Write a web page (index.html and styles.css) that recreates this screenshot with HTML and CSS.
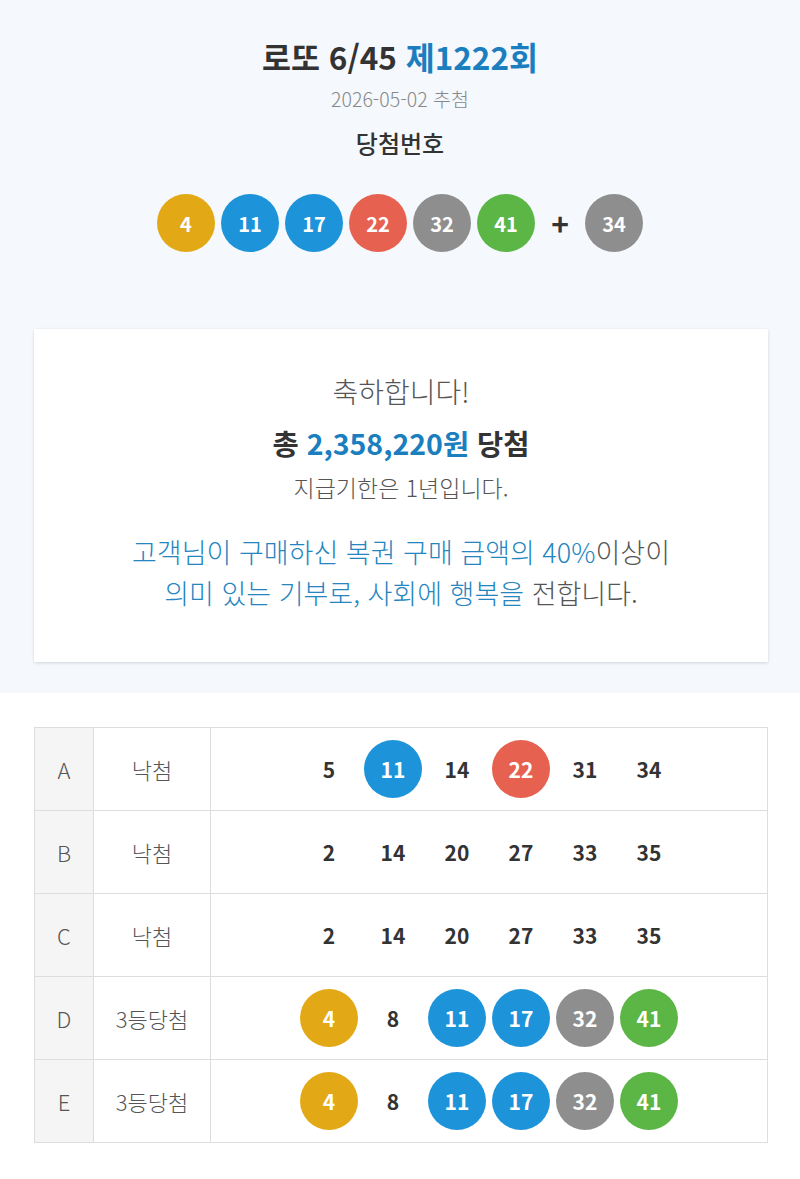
FILE: index.html
```html
<!DOCTYPE html>
<html lang="ko">
<head>
<meta charset="utf-8">
<link rel="stylesheet" href="styles.css">
</head>
<body>
<div class="top">
  <h1 class="title">로또 6/45 <span class="blue">제1222회</span></h1>
  <div class="date">2026-05-02 추첨</div>
  <div class="label">당첨번호</div>
  <div class="win-row">
    <span class="ball y">4</span>
    <span class="ball b">11</span>
    <span class="ball b">17</span>
    <span class="ball r">22</span>
    <span class="ball g">32</span>
    <span class="ball gr">41</span>
    <span class="plus">+</span>
    <span class="ball g">34</span>
  </div>
  <div class="card">
    <div class="congrats">축하합니다!</div>
    <div class="total">총 <span class="blue">2,358,220원</span> 당첨</div>
    <div class="limit">지급기한은 1년입니다.</div>
    <div class="donate"><span class="blue2">고객님이 구매하신 복권 구매 금액의 40%</span>이상이<br><span class="blue2">의미 있는 기부로, 사회에 행복을</span> 전합니다.</div>
  </div>
</div>
<table class="result">
  <tr>
    <td class="c1">A</td><td class="c2">낙첨</td>
    <td class="c3"><div class="nums"><span class="n">5</span><span class="n ball b">11</span><span class="n">14</span><span class="n ball r">22</span><span class="n">31</span><span class="n">34</span></div></td>
  </tr>
  <tr>
    <td class="c1">B</td><td class="c2">낙첨</td>
    <td class="c3"><div class="nums"><span class="n">2</span><span class="n">14</span><span class="n">20</span><span class="n">27</span><span class="n">33</span><span class="n">35</span></div></td>
  </tr>
  <tr>
    <td class="c1">C</td><td class="c2">낙첨</td>
    <td class="c3"><div class="nums"><span class="n">2</span><span class="n">14</span><span class="n">20</span><span class="n">27</span><span class="n">33</span><span class="n">35</span></div></td>
  </tr>
  <tr>
    <td class="c1">D</td><td class="c2">3등당첨</td>
    <td class="c3"><div class="nums"><span class="n ball y">4</span><span class="n">8</span><span class="n ball b">11</span><span class="n ball b">17</span><span class="n ball g">32</span><span class="n ball gr">41</span></div></td>
  </tr>
  <tr>
    <td class="c1">E</td><td class="c2">3등당첨</td>
    <td class="c3"><div class="nums"><span class="n ball y">4</span><span class="n">8</span><span class="n ball b">11</span><span class="n ball b">17</span><span class="n ball g">32</span><span class="n ball gr">41</span></div></td>
  </tr>
</table>
</body>
</html>
```
FILE: styles.css
```css
html, body {
  margin: 0;
  padding: 0;
  background: #ffffff;
  font-family: "Noto Sans CJK KR", "Noto Sans", sans-serif;
  color: #333;
}
.top {
  background: #f5f8fc;
  padding: 36px 0 31px;
  text-align: center;
}
.title {
  margin: 0;
  font-size: 31.5px;
  line-height: 40px;
  font-weight: 700;
  color: #333;
}
.blue { color: #1b7fbf; }
.blue2 { color: #2585bf; }
.date {
  margin-top: 10px;
  font-size: 19.5px;
  line-height: 26px;
  font-weight: 300;
  color: #888;
}
.label {
  margin-top: 16px;
  font-size: 24px;
  line-height: 30px;
  font-weight: 500;
  color: #333;
}
.win-row {
  margin-top: 36px;
  display: flex;
  justify-content: center;
  align-items: center;
  gap: 6px;
}
.ball {
  width: 58px;
  height: 58px;
  border-radius: 50%;
  display: inline-flex;
  align-items: center;
  justify-content: center;
  color: #fff;
  font-size: 20px;
  font-weight: 700;
}
.ball.y { background: #e3a815; }
.ball.b { background: #1d94da; }
.ball.r { background: #e6614f; }
.ball.g { background: #8e8e8e; }
.ball.gr { background: #5bb646; }
.plus {
  width: 38px;
  font-size: 30px;
  font-weight: 700;
  color: #333;
  line-height: 58px;
}
.card {
  margin: 77px 32px 0 34px;
  background: #fff;
  box-shadow: 0 1px 3px rgba(0,0,0,0.15);
  padding: 45px 0 49px;
}
.congrats {
  font-size: 28px;
  line-height: 34px;
  font-weight: 300;
  color: #555;
}
.total {
  margin-top: 17px;
  font-size: 28.5px;
  line-height: 36px;
  font-weight: 700;
  color: #333;
}
.limit {
  margin-top: 11px;
  font-size: 23px;
  line-height: 30px;
  font-weight: 300;
  color: #555;
}
.donate {
  margin-top: 29px;
  font-size: 27px;
  line-height: 41px;
  font-weight: 300;
  color: #555;
}
.result {
  margin: 34px 32px 0 34px;
  width: 734px;
  border-collapse: collapse;
  border: 1px solid #ddd;
}
.result td {
  border: 1px solid #ddd;
  height: 82px;
  padding: 0;
  text-align: center;
  font-size: 22px;
  font-weight: 300;
  color: #555;
}
.result .c1 { width: 58px; background: #f5f5f5; }
.result .c2 { width: 116px; }
.nums {
  display: flex;
  justify-content: center;
  gap: 6px;
}
.n {
  width: 58px;
  height: 58px;
  display: inline-flex;
  align-items: center;
  justify-content: center;
  font-size: 21px;
  font-weight: 700;
  color: #333;
}
.n.ball { color: #fff; }
```
